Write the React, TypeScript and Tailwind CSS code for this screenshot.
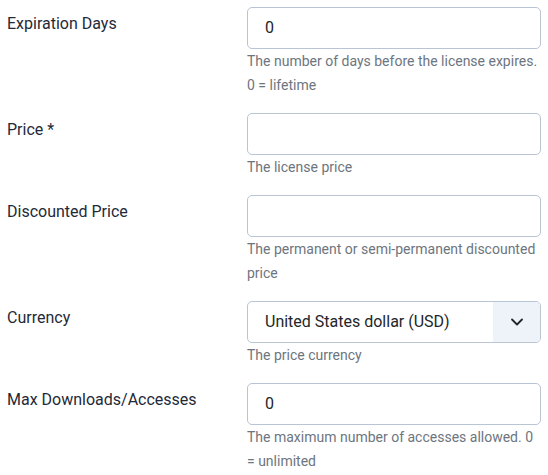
import { ChevronDown } from "lucide-react";

type Field = {
  label: string;
  value?: string;
  help: string;
  select?: boolean;
};

const fields: Field[] = [
  {
    label: "Expiration Days",
    value: "0",
    help: "The number of days before the license expires. 0 = lifetime",
  },
  { label: "Price *", value: "", help: "The license price" },
  {
    label: "Discounted Price",
    value: "",
    help: "The permanent or semi-permanent discounted price",
  },
  {
    label: "Currency",
    value: "United States dollar (USD)",
    help: "The price currency",
    select: true,
  },
  {
    label: "Max Downloads/Accesses",
    value: "0",
    help: "The maximum number of accesses allowed. 0 = unlimited",
  },
];

const App = () => {
  return (
    <div
      className="min-h-screen bg-white px-[7px] pt-[7px]"
      style={{ fontFamily: "Roboto, 'Noto Sans', sans-serif" }}
    >
      {fields.map((f) => (
        <div key={f.label} className="flex mb-[16px]">
          {/* LABEL */}
          <div className="w-[240px] shrink-0 pt-[5px] text-[16px] leading-[24px] text-[#1f2a38]">
            {f.label}
          </div>

          {/* CONTROL */}
          <div className="w-[296px]">
            {f.select ? (
              <div className="flex h-[42px] rounded-[5px] border border-[#b9c4d5] overflow-hidden">
                <div className="flex-1 flex items-center pl-[17px] text-[16px] text-[#22262a]">
                  {f.value}
                </div>
                <div className="w-[47px] flex items-center justify-center bg-[#eef2f9]">
                  <ChevronDown size={20} strokeWidth={2.2} className="text-[#22262a]" />
                </div>
              </div>
            ) : (
              <div className="flex items-center h-[42px] rounded-[5px] border border-[#b9c4d5] pl-[17px] text-[16px] text-[#22262a]">
                {f.value}
              </div>
            )}
            <p className="text-[14px] leading-[24px] text-[#6d757e]">{f.help}</p>
          </div>
        </div>
      ))}
    </div>
  );
};

export default App;
